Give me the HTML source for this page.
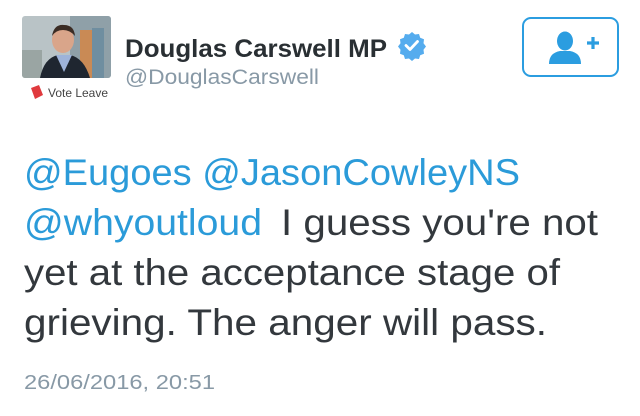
<!DOCTYPE html>
<html><head><meta charset="utf-8"><style>
html,body{margin:0;padding:0;background:#fff;width:640px;height:416px;overflow:hidden}
</style></head><body>
<svg width="640" height="416" viewBox="0 0 640 416" xmlns="http://www.w3.org/2000/svg" style="display:block">
<defs><clipPath id="av"><rect x="22" y="16" width="89" height="62" rx="3"/></clipPath></defs>
<g clip-path="url(#av)">
<rect x="22" y="16" width="89" height="62" fill="#b9c3c6"/>
<rect x="70" y="16" width="41" height="62" fill="#8fa0a8"/>
<rect x="80" y="30" width="12" height="48" fill="#c98a55"/>
<rect x="92" y="28" width="12" height="50" fill="#6f8ea0"/>
<rect x="22" y="50" width="20" height="28" fill="#9aa5a3"/>
<path d="M40 78 Q44 58 58 55 L70 55 Q84 58 90 78 Z" fill="#1f2630"/>
<path d="M56 55 L64 72 L72 55 Z" fill="#9eb3d9"/>
<ellipse cx="63" cy="40" rx="11" ry="13" fill="#d9a58a"/>
<path d="M52 36 Q54 24 64 25 Q74 25 75 36 Q70 30 63 30 Q56 30 52 36Z" fill="#3b2c24"/>
</g>
<path d="M31 88 L39 85 L43 95 L35 99 Z" fill="#e03a3e"/>
<text x="48" y="97" font-family="Liberation Sans, sans-serif" font-size="12" fill="#444" textLength="60" lengthAdjust="spacingAndGlyphs">Vote Leave</text>
<text x="125" y="57" font-family="Liberation Sans, sans-serif" font-size="25" font-weight="bold" fill="#292f33" textLength="262" lengthAdjust="spacingAndGlyphs">Douglas Carswell MP</text>
<path d="M412 32 l3 2.5 4-.5 1.2 3.8 3.8 1.5-.5 4 2.5 3.2-2.5 3.2.5 4-3.8 1.5-1.2 3.8-4-.5-3 2.5-3-2.5-4 .5-1.2-3.8-3.8-1.5.5-4-2.5-3.2 2.5-3.2-.5-4 3.8-1.5 1.2-3.8 4 .5z" fill="#55acee"/>
<path d="M406 45.5 l4 4 7.5-8" stroke="#fff" stroke-width="2.8" fill="none" stroke-linecap="round" stroke-linejoin="round"/>
<text x="125" y="84" font-family="Liberation Sans, sans-serif" font-size="21" fill="#8899a6" textLength="194" lengthAdjust="spacingAndGlyphs">@DouglasCarswell</text>
<rect x="523" y="18" width="95" height="58" rx="8" fill="none" stroke="#2b9de0" stroke-width="2"/>
<ellipse cx="565" cy="41" rx="8" ry="9.5" fill="#2b9de0"/>
<path d="M549 64 Q549 53 560 51 L570 51 Q581 53 581 64 Z" fill="#2b9de0"/>
<path d="M587 43 h12 M593 37 v12" stroke="#2b9de0" stroke-width="3.2"/>
<g font-family="Liberation Sans, sans-serif" font-size="37">
<text x="24" y="185" fill="#2b9bd9" textLength="496" lengthAdjust="spacingAndGlyphs">@Eugoes @JasonCowleyNS</text>
<text x="24" y="235" fill="#2b9bd9" textLength="238" lengthAdjust="spacingAndGlyphs">@whyoutloud</text>
<text x="281" y="235" fill="#33383d" textLength="317" lengthAdjust="spacingAndGlyphs">I guess you're not</text>
<text x="24" y="285" fill="#33383d" textLength="536" lengthAdjust="spacingAndGlyphs">yet at the acceptance stage of</text>
<text x="24" y="335" fill="#33383d" textLength="523" lengthAdjust="spacingAndGlyphs">grieving.  The anger will pass.</text>
</g>
<text x="24" y="389" font-family="Liberation Sans, sans-serif" font-size="20" fill="#8899a6" textLength="191" lengthAdjust="spacingAndGlyphs">26/06/2016, 20:51</text>
</svg>
</body></html>
